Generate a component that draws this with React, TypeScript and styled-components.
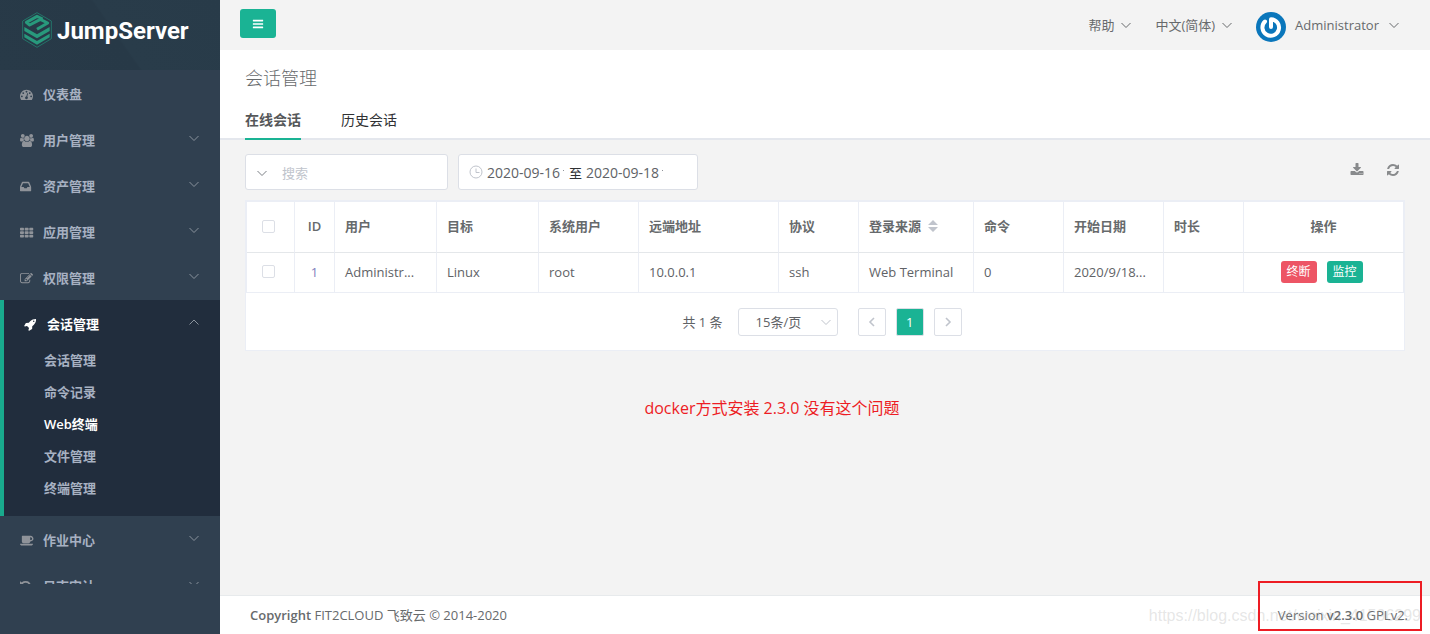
import React from 'react';
import styled, { createGlobalStyle, css } from 'styled-components';

const GREEN = '#1ab394';

const GlobalStyle = createGlobalStyle`
  *, *::before, *::after { box-sizing: border-box; }
  body {
    margin: 0;
    background: #f3f3f3;
    color: #676a6c;
    font-family: 'Open Sans', 'Noto Sans CJK SC', sans-serif;
    font-size: 13px;
    line-height: 20px;
  }
  button, input, select { font: inherit; color: inherit; }
  h1, p, ul { margin: 0; padding: 0; }
  ul { list-style: none; }
  a { color: inherit; text-decoration: none; }
`;

/* ---------- icons ---------- */

const glyphs = {
  dashboard: 'M384 1152q0-53-37.5-90.5t-90.5-37.5-90.5 37.5-37.5 90.5 37.5 90.5 90.5 37.5 90.5-37.5 37.5-90.5zm192-448q0-53-37.5-90.5t-90.5-37.5-90.5 37.5-37.5 90.5 37.5 90.5 90.5 37.5 90.5-37.5 37.5-90.5zm428 481l101-382q6-26-7.5-48.5t-38.5-29.5-48 6.5-30 39.5l-101 382q-60 5-107 43.5t-63 98.5q-20 77 20 146t117 89 146-20 89-117q16-60-6-117t-72-91zm660-33q0-53-37.5-90.5t-90.5-37.5-90.5 37.5-37.5 90.5 37.5 90.5 90.5 37.5 90.5-37.5 37.5-90.5zm-640-640q0-53-37.5-90.5t-90.5-37.5-90.5 37.5-37.5 90.5 37.5 90.5 90.5 37.5 90.5-37.5 37.5-90.5zm448 192q0-53-37.5-90.5t-90.5-37.5-90.5 37.5-37.5 90.5 37.5 90.5 90.5 37.5 90.5-37.5 37.5-90.5zm320 448q0 261-141 483-19 29-54 29h-1402q-35 0-54-29-141-221-141-483 0-182 71-348t191-286 286-191 348-71 348 71 286 191 191 286 71 348z',
  users: 'M593 896q-162 5-265 128h-134q-82 0-138-40.5t-56-118.5q0-353 124-353 6 0 43.5 21t97.5 42.5 119 21.5q67 0 133-23-5 37-5 66 0 139 81 256zm1071 637q0 120-73 189.5t-194 69.5h-874q-121 0-194-69.5t-73-189.5q0-53 3.5-103.5t14-109 26.5-108.5 43-97.5 62-81 85.5-53.5 111.5-20q10 0 43 21.5t73 48 107 48 135 21.5 135-21.5 107-48 73-48 43-21.5q61 0 111.5 20t85.5 53.5 62 81 43 97.5 26.5 108.5 14 109 3.5 103.5zm-1024-1277q0 106-75 181t-181 75-181-75-75-181 75-181 181-75 181 75 75 181zm704 384q0 159-112.5 271.5t-271.5 112.5-271.5-112.5-112.5-271.5 112.5-271.5 271.5-112.5 271.5 112.5 112.5 271.5zm576 225q0 78-56 118.5t-138 40.5h-134q-103-123-265-128 81-117 81-256 0-29-5-66 66 23 133 23 59 0 119-21.5t97.5-42.5 43.5-21q124 0 124 353zm-128-609q0 106-75 181t-181 75-181-75-75-181 75-181 181-75 181 75 75 181z',
  inbox: 'M1023 960h316q-1-3-2.5-8t-2.5-8l-212-496h-708l-212 496q-1 2-2.5 8t-2.5 8h316l95 192h320zm513 30v482q0 26-19 45t-45 19h-1408q-26 0-45-19t-19-45v-482q0-62 25-123l238-552q10-25 36.5-42t52.5-17h832q26 0 52.5 17t36.5 42l238 552q25 61 25 123z',
  grid: 'M96 256h352q96 0 96 96v160q0 96-96 96h-352q-96 0-96-96v-160q0-96 96-96zM740 256h352q96 0 96 96v160q0 96-96 96h-352q-96 0-96-96v-160q0-96 96-96zM1376 256h352q96 0 96 96v160q0 96-96 96h-352q-96 0-96-96v-160q0-96 96-96zM96 736h352q96 0 96 96v160q0 96-96 96h-352q-96 0-96-96v-160q0-96 96-96zM740 736h352q96 0 96 96v160q0 96-96 96h-352q-96 0-96-96v-160q0-96 96-96zM1376 736h352q96 0 96 96v160q0 96-96 96h-352q-96 0-96-96v-160q0-96 96-96zM96 1216h352q96 0 96 96v160q0 96-96 96h-352q-96 0-96-96v-160q0-96 96-96zM740 1216h352q96 0 96 96v160q0 96-96 96h-352q-96 0-96-96v-160q0-96 96-96zM1376 1216h352q96 0 96 96v160q0 96-96 96h-352q-96 0-96-96v-160q0-96 96-96z',
  edit: 'M888 1184l116-116-152-152-116 116v56h96v96h56zm440-720q-16-16-33 1l-350 350q-17 17-1 33t33-1l350-350q17-17 1-33zm80 594v190q0 119-84.5 203.5t-203.5 84.5h-832q-119 0-203.5-84.5t-84.5-203.5v-832q0-119 84.5-203.5t203.5-84.5h832q63 0 117 25 15 7 18 23 3 17-9 29l-49 49q-14 14-32 8-23-6-45-6h-832q-66 0-113 47t-47 113v832q0 66 47 113t113 47h832q66 0 113-47t47-113v-126q0-13 9-22l64-64q15-15 35-7t20 29zm-96-738l288 288-672 672h-288v-288zm444 132l-92 92-288-288 92-92q28-28 68-28t68 28l152 152q28 28 28 68t-28 68z',
  rocket: 'M1440 448q0-40-28-68t-68-28-68 28-28 68 28 68 68 28 68-28 28-68zm224-288q0 249-75.5 430.5t-253.5 360.5q-81 80-195 176l-20 379q-2 16-16 26l-384 224q-7 4-16 4-12 0-23-9l-64-64q-13-14-8-32l85-276-281-281-276 85q-3 1-9 1-14 0-23-9l-64-64q-17-19-5-39l224-384q10-14 26-16l379-20q96-114 176-195 188-187 358-258t431-71q14 0 24 9.5t10 22.5z',
  coffee: 'M1664 640q0-80-56-136t-136-56h-64v384h64q80 0 136-56t56-136zm-1664 704h1792q0 106-75 181t-181 75h-1280q-106 0-181-75t-75-181zm1856-704q0 159-112.5 271.5t-271.5 112.5h-64v32q0 92-66 158t-158 66h-704q-92 0-158-66t-66-158v-736q0-26 19-45t45-19h1152q159 0 271.5 112.5t112.5 271.5z',
  history: 'M1536 896q0 156-61 298t-164 245-245 164-298 61q-172 0-327-72.5t-264-204.5q-7-10-6.5-22.5t8.5-20.5l137-138q10-9 25-9 16 2 23 12 73 95 179 147t225 52q104 0 198.5-40.5t163.5-109.5 109.5-163.5 40.5-198.5-40.5-198.5-109.5-163.5-163.5-109.5-198.5-40.5q-98 0-188 35.5t-160 101.5l137 138q31 30 14 69-17 40-59 40h-448q-26 0-45-19t-19-45v-448q0-42 40-59 39-17 69 14l130 129q107-101 244.5-156.5t284.5-55.5q156 0 298 61t245 164 164 245 61 298z',
  bars: 'M1664 1344v128q0 26-19 45t-45 19h-1408q-26 0-45-19t-19-45v-128q0-26 19-45t45-19h1408q26 0 45 19t19 45zm0-512v128q0 26-19 45t-45 19h-1408q-26 0-45-19t-19-45v-128q0-26 19-45t45-19h1408q26 0 45 19t19 45zm0-512v128q0 26-19 45t-45 19h-1408q-26 0-45-19t-19-45v-128q0-26 19-45t45-19h1408q26 0 45 19t19 45z',
  download: 'M1344 1344q0-26-19-45t-45-19-45 19-19 45 19 45 45 19 45-19 19-45zm256 0q0-26-19-45t-45-19-45 19-19 45 19 45 45 19 45-19 19-45zm128-224v320q0 40-28 68t-68 28h-1472q-40 0-68-28t-28-68v-320q0-40 28-68t68-28h465l135 136q58 56 136 56t136-56l136-136h464q40 0 68 28t28 68zm-325-569q17 41-14 70l-448 448q-18 19-45 19t-45-19l-448-448q-31-29-14-70 17-39 59-39h256v-448q0-26 19-45t45-19h256q26 0 45 19t19 45v448h256q42 0 59 39z',
  refresh: 'M1639 1056q0 5-1 7-64 268-268 434.5t-478 166.5q-146 0-282.5-55t-243.5-157l-129 129q-19 19-45 19t-45-19-19-45v-448q0-26 19-45t45-19h448q26 0 45 19t19 45-19 45l-137 137q71 66 161 102t187 36q134 0 250-65t186-179q11-17 53-117 8-23 30-23h192q13 0 22.5 9.5t9.5 22.5zm25-800v448q0 26-19 45t-45 19h-448q-26 0-45-19t-19-45 19-45l138-138q-148-137-349-137-134 0-250 65t-186 179q-11 17-53 117-8 23-30 23h-199q-13 0-22.5-9.5t-9.5-22.5v-7q65-268 270-434.5t480-166.5q146 0 284 55.5t245 156.5l130-129q19-19 45-19t45 19 19 45z',
};

type GlyphName = keyof typeof glyphs;

const Glyph = ({ name, size = 14 }: { name: GlyphName; size?: number }) => (
  <svg width={size} height={size} viewBox="0 0 1792 1792" fill="currentColor" overflow="visible" aria-hidden="true">
    <path d={glyphs[name]} />
  </svg>
);

const Chevron = ({ up = false }: { up?: boolean }) => (
  <svg width="12" height="12" viewBox="0 0 12 12" fill="none" stroke="currentColor" aria-hidden="true">
    <path d={up ? 'M1.5 8.5L6 4l4.5 4.5' : 'M1.5 4L6 8.5 10.5 4'} />
  </svg>
);

const SideChevron = ({ left = false }: { left?: boolean }) => (
  <svg width="12" height="12" viewBox="0 0 12 12" fill="none" stroke="currentColor" strokeWidth="1.6" aria-hidden="true">
    <path d={left ? 'M8 2L4 6l4 4' : 'M4 2l4 4-4 4'} />
  </svg>
);

const LogoMark = () => (
  <svg width="30" height="36" viewBox="0 0 90 108" aria-hidden="true">
    <path d="M45 2l43 25v53L45 106 2 80V27z" fill="none" stroke="#248070" strokeWidth="2.5" />
    <path
      d="M62 21L45 13 13 31l10 8 32-17 22 11-32 19"
      fill="none"
      stroke="#28997c"
      strokeWidth="9"
      strokeLinejoin="round"
    />
    <g fill="#28997c">
      <path d="M7 45l38 22 38-22v12L45 79 7 57z" />
      <path d="M7 65l38 22 38-22v11L45 98 7 76z" />
    </g>
  </svg>
);

const Avatar = () => (
  <svg width="30" height="30" viewBox="0 0 30 30" aria-hidden="true">
    <circle cx="15" cy="15" r="15" fill="#0a76bb" />
    <path d="M15 15V7.2A8.3 8.3 0 1 1 9 9.5" fill="none" stroke="#fff" strokeWidth="4" strokeLinecap="round" strokeLinejoin="round" />
  </svg>
);

const ClockIcon = () => (
  <svg width="14" height="14" viewBox="0 0 14 14" fill="none" stroke="#c0c4cc" aria-hidden="true">
    <circle cx="7" cy="7" r="6" />
    <path d="M7 3.5V7.5h3.5" />
  </svg>
);

/* ---------- frame ---------- */

const Page = styled.div`
  display: grid;
  grid-template-columns: 220px minmax(0, 1fr);
  min-height: 100vh;
`;

const Sidebar = styled.aside`
  position: sticky;
  top: 0;
  height: 100vh;
  display: flex;
  flex-direction: column;
  padding-bottom: 50px;
  background: #304050;
  color: #a7b1c2;
`;

const Brand = styled.a`
  display: flex;
  align-items: flex-start;
  gap: 5px;
  flex: none;
  height: 70px;
  padding: 12px 0 0 22px;
  color: #fff;
  font-family: 'Roboto', sans-serif;
  font-size: 24px;
  font-weight: 700;
  line-height: 38px;
  background: linear-gradient(55deg, #283a48 0%, #273947 52%, #293c4a 53%, #283b49 100%);
`;

const Menu = styled.ul`
  flex: 1;
  min-height: 0;
  overflow: hidden;
  font-weight: 600;
`;

const MenuGroup = styled.li<{ $open?: boolean }>`
  ${({ $open }) => $open && css`
    background: #212d3d;
    border-left: 4px solid #19aa8d;
    padding-bottom: 10px;
  `}
`;

const MenuLink = styled.a<{ $active?: boolean }>`
  display: flex;
  align-items: center;
  height: 46px;
  padding: 2px 20px 0;
  color: ${({ $active }) => ($active ? '#fff' : 'inherit')};
`;

const MenuIcon = styled.span<{ $active?: boolean }>`
  display: flex;
  width: 23px;
  color: ${({ $active }) => ($active ? '#fff' : '#8f9399')};
`;

const MenuArrow = styled.span`
  display: flex;
  margin-left: auto;
  padding-bottom: 4px;
  color: #8a939d;
`;

const SubLink = styled.a<{ $current?: boolean }>`
  display: block;
  height: 32px;
  padding-left: 40px;
  line-height: 28px;
  color: ${({ $current }) => ($current ? '#fff' : 'inherit')};
`;

const Main = styled.div`
  display: flex;
  flex-direction: column;
  min-width: 0;
`;

const Navbar = styled.header`
  display: flex;
  align-items: center;
  justify-content: space-between;
  height: 50px;
  padding: 0 30px 0 20px;
`;

const ToggleButton = styled.button`
  display: flex;
  align-items: center;
  justify-content: center;
  width: 36px;
  height: 29px;
  margin-bottom: 3px;
  border: 0;
  border-radius: 3px;
  background: ${GREEN};
  color: #fff;
`;

const NavMenu = styled.nav`
  display: flex;
  align-items: center;
  gap: 23px;
`;

const NavItem = styled.a`
  display: flex;
  align-items: center;
  gap: 6px;
`;

const UserItem = styled(NavItem)`
  gap: 9px;
  svg:first-child { margin-top: 4px; }
`;

const Heading = styled.section`
  padding: 16px 25px 0;
  background: #fff;
  border-bottom: 2px solid #e4e7ed;
`;

const Title = styled.h1`
  font-size: 18px;
  font-weight: 300;
  line-height: 24px;
`;

const Tabs = styled.div`
  display: flex;
  gap: 40px;
  margin: 10px 0 -2px;
`;

const Tab = styled.button<{ $active?: boolean }>`
  height: 40px;
  padding: 2px 0 0;
  border: 0;
  border-bottom: 2px solid ${({ $active }) => ($active ? GREEN : 'transparent')};
  background: none;
  font-size: 14px;
  font-weight: ${({ $active }) => ($active ? 600 : 400)};
  color: ${({ $active }) => ($active ? '#555759' : '#303133')};
`;

/* ---------- content ---------- */

const Content = styled.main`
  flex: 1;
  padding: 14px 25px 0;
`;

const Toolbar = styled.div`
  display: flex;
  align-items: flex-start;
  gap: 10px;
  margin-bottom: 10px;
`;

const Field = styled.div<{ $width: number }>`
  display: flex;
  align-items: center;
  width: ${({ $width }) => $width}px;
  height: 36px;
  padding: 1px 9px 0 10px;
  border: 1px solid #dcdfe6;
  border-radius: 3px;
  background: #fff;
`;

const PlainInput = styled.input`
  flex: 1;
  min-width: 0;
  padding: 0;
  border: 0;
  outline: 0;
  background: none;
  &::placeholder { color: #c0c4cc; }
`;

const SearchArrow = styled.span`
  display: flex;
  width: 26px;
  color: #7b7f85;
`;

const DateInput = styled.input`
  width: 75px;
  padding: 0;
  border: 0;
  outline: 0;
  background: none;
  color: #606266;
  font-size: 14px;
`;

const DateIcon = styled.span`
  display: flex;
  width: 18px;
  padding-bottom: 2px;
`;

const DateTick = styled.span`
  width: 1px;
  height: 1px;
  margin: 0 5px 4px 1px;
  background: #909399;
`;

const DateSeparator = styled.span`
  width: 17px;
  color: #303133;
`;

const Actions = styled.div`
  display: flex;
  gap: 22px;
  margin-left: auto;
  padding: 9px 5px 0 0;
`;

const IconButton = styled.button`
  display: flex;
  padding: 0;
  border: 0;
  background: none;
  color: #888a8c;
`;

const Card = styled.section`
  border: 1px solid #ebeef5;
  background: #fff;
`;

const Table = styled.table`
  width: 100%;
  table-layout: fixed;
  border-collapse: separate;
  border-spacing: 0;
  border: solid #ebeef5;
  border-width: 1px 0 0 1px;
`;

const cell = css<{ $center?: boolean; $controls?: boolean }>`
  padding: 0 ${({ $controls }) => ($controls ? 14 : 10)}px 2px 10px;
  border: solid #ebeef5;
  border-width: 0 1px 1px 0;
  text-align: ${({ $center }) => ($center ? 'center' : 'left')};
  white-space: nowrap;
`;

const HeadCell = styled.th`
  ${cell}
  height: 51px;
  border-bottom-color: #e4e7ea;
  font-weight: 600;
`;

const BodyCell = styled.td`
  ${cell}
  height: 40px;
  color: #606266;
`;

const CheckBox = styled.input`
  appearance: none;
  display: block;
  width: 13px;
  height: 13px;
  margin: 0 auto;
  border: 1px solid #dcdfe6;
  border-radius: 2px;
  background: #fff;
`;

const SortLabel = styled.span`
  display: flex;
  align-items: center;
  gap: 7px;
`;

const RowLink = styled.a`
  color: #7f80bd;
`;

const RowActions = styled.div`
  display: flex;
  justify-content: center;
  gap: 10px;
`;

const TagButton = styled.button<{ $danger?: boolean }>`
  width: 36px;
  height: 22px;
  padding: 0;
  border: 0;
  border-radius: 3px;
  background: ${({ $danger }) => ($danger ? '#ed5565' : GREEN)};
  color: #fff;
  font-size: 12px;
  line-height: 22px;
`;

const Pagination = styled.nav`
  display: flex;
  align-items: center;
  justify-content: center;
  gap: 10px;
  padding: 15px 6px 14px 0;
  color: #606266;
`;

const PageSize = styled.div`
  position: relative;
  margin: 0 10px 0 5px;
  color: #c0c4cc;
  svg { position: absolute; right: 6px; top: 8px; pointer-events: none; }
`;

const PageSizeSelect = styled.select`
  appearance: none;
  display: block;
  width: 100px;
  height: 28px;
  padding: 0 17px;
  border: 1px solid #dcdfe6;
  border-radius: 3px;
  background: #fff;
  color: #606266;
`;

const PageButton = styled.button<{ $active?: boolean }>`
  display: flex;
  align-items: center;
  justify-content: center;
  width: 28px;
  height: 28px;
  padding: 0;
  border: 1px solid #dcdfe6;
  border-radius: 2px;
  background: ${({ $active }) => ($active ? GREEN : '#fff')};
  color: ${({ $active }) => ($active ? '#fff' : '#c0c4cc')};
`;

const Note = styled.p`
  padding: 45px 106px 45px 0;
  color: #ed1c24;
  font-size: 16px;
  line-height: 24px;
  text-align: center;
`;

const Footer = styled.footer`
  position: relative;
  display: flex;
  justify-content: space-between;
  padding: 9px 22px 9px 30px;
  border-top: 1px solid #e7eaec;
  background: #fff;
  b { font-weight: 600; }
`;

const Watermark = styled.span`
  position: absolute;
  right: 9px;
  top: 10px;
  color: rgba(170, 170, 170, 0.3);
  font-family: 'Liberation Sans', sans-serif;
  font-size: 16px;
`;

const Highlight = styled.span`
  position: absolute;
  right: 8px;
  top: -15px;
  width: 164px;
  height: 50px;
  border: 2px solid #ed1c24;
`;

/* ---------- data ---------- */

const menuBefore: { icon: GlyphName; label: string; leaf?: boolean }[] = [
  { icon: 'dashboard', label: '仪表盘', leaf: true },
  { icon: 'users', label: '用户管理' },
  { icon: 'inbox', label: '资产管理' },
  { icon: 'grid', label: '应用管理' },
  { icon: 'edit', label: '权限管理' },
];
const menuAfter: typeof menuBefore = [
  { icon: 'coffee', label: '作业中心' },
  { icon: 'history', label: '日志审计' },
];
const subItems = ['会话管理', '命令记录', 'Web终端', '文件管理', '终端管理'];

const columns = [
  { label: '用户', value: 'Administr...', width: 102 },
  { label: '目标', value: 'Linux', width: 102 },
  { label: '系统用户', value: 'root', width: 100 },
  { label: '远端地址', value: '10.0.0.1', width: 140 },
  { label: '协议', value: 'ssh', width: 80 },
  { label: '登录来源', value: 'Web Terminal', width: 115, sortable: true },
  { label: '命令', value: '0', width: 90 },
  { label: '开始日期', value: '2020/9/18...', width: 100 },
  { label: '时长', value: '', width: 80 },
];

const MenuEntry = ({ icon, label, leaf }: (typeof menuBefore)[number]) => (
  <MenuGroup>
    <MenuLink href="#">
      <MenuIcon><Glyph name={icon} size={13} /></MenuIcon>
      {label}
      {!leaf && <MenuArrow><Chevron /></MenuArrow>}
    </MenuLink>
  </MenuGroup>
);

export default function App() {
  return (
    <>
      <GlobalStyle />
      <Page>
        <Sidebar>
          <Brand href="#"><LogoMark />JumpServer</Brand>
          <Menu>
            {menuBefore.map((item) => <MenuEntry key={item.label} {...item} />)}
            <MenuGroup $open>
              <MenuLink href="#" $active>
                <MenuIcon $active><Glyph name="rocket" size={13} /></MenuIcon>
                会话管理
                <MenuArrow><Chevron up /></MenuArrow>
              </MenuLink>
              <ul>
                {subItems.map((label) => (
                  <li key={label}><SubLink href="#" $current={label === 'Web终端'}>{label}</SubLink></li>
                ))}
              </ul>
            </MenuGroup>
            {menuAfter.map((item) => <MenuEntry key={item.label} {...item} />)}
          </Menu>
        </Sidebar>

        <Main>
          <Navbar>
            <ToggleButton aria-label="菜单"><Glyph name="bars" size={12} /></ToggleButton>
            <NavMenu>
              <NavItem href="#">帮助<Chevron /></NavItem>
              <NavItem href="#">中文(简体)<Chevron /></NavItem>
              <UserItem href="#"><Avatar />Administrator<Chevron /></UserItem>
            </NavMenu>
          </Navbar>

          <Heading>
            <Title>会话管理</Title>
            <Tabs role="tablist">
              <Tab role="tab" aria-selected $active>在线会话</Tab>
              <Tab role="tab" aria-selected={false}>历史会话</Tab>
            </Tabs>
          </Heading>

          <Content>
            <Toolbar>
              <Field $width={203}>
                <SearchArrow><Chevron /></SearchArrow>
                <PlainInput placeholder="搜索" aria-label="搜索" />
              </Field>
              <Field $width={240}>
                <DateIcon><ClockIcon /></DateIcon>
                <DateInput defaultValue="2020-09-16" aria-label="开始日期" />
                <DateTick />
                <DateSeparator>至</DateSeparator>
                <DateInput defaultValue="2020-09-18" aria-label="结束日期" />
                <DateTick />
              </Field>
              <Actions>
                <IconButton aria-label="导出"><Glyph name="download" size={14} /></IconButton>
                <IconButton aria-label="刷新"><Glyph name="refresh" size={14} /></IconButton>
              </Actions>
            </Toolbar>

            <Card>
              <Table>
                <colgroup>
                  <col style={{ width: 48 }} />
                  <col style={{ width: 40 }} />
                  {columns.map((c) => <col key={c.label} style={{ width: c.width }} />)}
                  <col style={{ width: 160 }} />
                </colgroup>
                <thead>
                  <tr>
                    <HeadCell $controls><CheckBox type="checkbox" aria-label="全选" /></HeadCell>
                    <HeadCell $center>ID</HeadCell>
                    {columns.map((c) => (
                      <HeadCell key={c.label}>
                        {c.sortable ? (
                          <SortLabel>
                            {c.label}
                            <svg width="10" height="14" viewBox="0 0 10 14" fill="#c0c4cc" aria-hidden="true">
                              <path d="M5 1l5 5H0zM5 13l5-5H0z" />
                            </svg>
                          </SortLabel>
                        ) : c.label}
                      </HeadCell>
                    ))}
                    <HeadCell $center>操作</HeadCell>
                  </tr>
                </thead>
                <tbody>
                  <tr>
                    <BodyCell $controls><CheckBox type="checkbox" aria-label="选择 1" /></BodyCell>
                    <BodyCell $center><RowLink href="#">1</RowLink></BodyCell>
                    {columns.map((c) => <BodyCell key={c.label}>{c.value}</BodyCell>)}
                    <BodyCell $controls>
                      <RowActions>
                        <TagButton $danger>终断</TagButton>
                        <TagButton>监控</TagButton>
                      </RowActions>
                    </BodyCell>
                  </tr>
                </tbody>
              </Table>
              <Pagination aria-label="分页">
                <span>共 1 条</span>
                <PageSize>
                  <PageSizeSelect aria-label="每页条数"><option>15条/页</option></PageSizeSelect>
                  <Chevron />
                </PageSize>
                <PageButton aria-label="上一页"><SideChevron left /></PageButton>
                <PageButton $active>1</PageButton>
                <PageButton aria-label="下一页"><SideChevron /></PageButton>
              </Pagination>
            </Card>

            <Note>docker方式安装 2.3.0 没有这个问题</Note>
          </Content>

          <Footer>
            <span><b>Copyright</b> FIT2CLOUD 飞致云 © 2014-2020</span>
            <span>Version <b>v2.3.0</b> GPLv2.</span>
            <Watermark>https://blog.csdn.net/weixin_41596299</Watermark>
            <Highlight />
          </Footer>
        </Main>
      </Page>
    </>
  );
}
